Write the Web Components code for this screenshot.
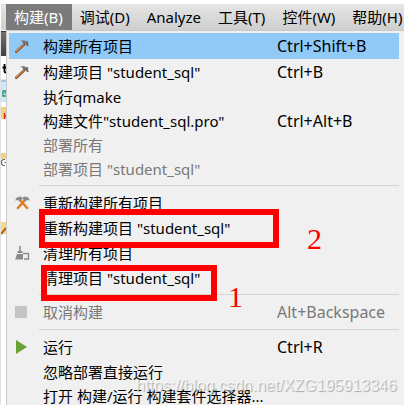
<!DOCTYPE html>
<html lang="zh-CN">
  <head>
    <meta charset="UTF-8" />
    <title>Qt Creator - 构建</title>
    <style>
      body {
        margin: 0;
        background: #fff;
        font-family: "Noto Sans", "Noto Sans CJK SC", sans-serif;
        font-size: 15px;
        color: #000;
      }
    </style>
  </head>
  <body>
    <ide-window>
      <menu-bar slot="bar">
        <menu-title active>构建(B)</menu-title>
        <menu-title>调试(D)</menu-title>
        <menu-title>Analyze</menu-title>
        <menu-title>工具(T)</menu-title>
        <menu-title>控件(W)</menu-title>
        <menu-title>帮助(H)</menu-title>
      </menu-bar>
      <side-strip slot="side"></side-strip>
      <drop-menu>
        <menu-item icon="hammer" keys="Ctrl+Shift+B" selected>构建所有项目</menu-item>
        <menu-item icon="hammer" keys="Ctrl+B">构建项目 "student_sql"</menu-item>
        <menu-item>执行qmake</menu-item>
        <menu-item keys="Ctrl+Alt+B">构建文件"student_sql.pro"</menu-item>
        <menu-item disabled>部署所有</menu-item>
        <menu-item disabled>部署项目 "student_sql"</menu-item>
        <menu-line></menu-line>
        <menu-item icon="rebuild">重新构建所有项目</menu-item>
        <menu-item>重新构建项目 "student_sql"</menu-item>
        <menu-item icon="clean">清理所有项目</menu-item>
        <menu-item>清理项目 "student_sql"</menu-item>
        <menu-line></menu-line>
        <menu-item icon="stop" keys="Alt+Backspace" disabled>取消构建</menu-item>
        <menu-line></menu-line>
        <menu-item icon="run" keys="Ctrl+R">运行</menu-item>
        <menu-item>忽略部署直接运行</menu-item>
        <menu-item>打开 构建/运行 构建套件选择器...</menu-item>
      </drop-menu>
      <mark-layer slot="marks"></mark-layer>
    </ide-window>

    <script>
      const icons = {
        hammer: `
          <path d="M1.200 12.800 9 5.500" stroke="#8a5230" stroke-width="2.600" stroke-linecap="round"/>
          <path d="M1.200 12.300 8.600 5.300" stroke="#cf8a58" stroke-width="1.200" stroke-linecap="round"/>
          <path d="M5.500 1.500C7.500.5 9.500.8 11 2.200l1.200-.4 1.300 1.600-.6 1 .8 2-1.500.8L10 4.600 8.600 5.200 7.800 2.900z" fill="#64696b"/>
          <path d="M5.500 1.800c2-.8 3.800-.4 5.200.9l1 1" stroke="#a3a9ac" stroke-width=".8" fill="none"/>`,
        rebuild: `
          <path d="M2.200 12.800 10.500 3.500M12.800 12.800 4.500 3.500" stroke="#e07b1a" stroke-width="2.400"/>
          <path d="M0 4.500 2 1.200 6 .5 7.800 2.500 4.500 5.500 3 4zM15 4.500 13 1.200 9 .5 7.200 2.500 10.500 5.500 12 4z" fill="#8b8b8b"/>`,
        clean: `
          <path d="M4.200 0h1.600v5H4.200zM2.500 5h5v2h-5zM2 8h6v5.500H0z" fill="#8b8b8b"/>
          <path d="M8 7.500h5.500v5.500H9" stroke="#8b8b8b" stroke-width="1.400" fill="none"/>`,
        stop: `<path d="M0 1h12v12H0z" fill="#c3c3c3"/>`,
        run: `<path d="M1 0 12 7 1 14z" fill="#6aa136"/>`,
      };

      class IdeWindow extends HTMLElement {
        constructor() {
          super();
          this.attachShadow({ mode: "open" }).innerHTML = `
            <style>
              :host {
                display: grid;
                grid-template: auto 1fr / 6px 1fr;
                position: relative;
                box-sizing: border-box;
                height: 100vh;
                padding-top: 4px;
                overflow: hidden;
              }
              slot[name="bar"] { display: block; grid-column: 1 / 3; min-width: 0; }
            </style>
            <slot name="bar"></slot>
            <slot name="side"></slot>
            <slot></slot>
            <slot name="marks"></slot>
          `;
        }
      }

      class MenuBar extends HTMLElement {
        constructor() {
          super();
          this.attachShadow({ mode: "open" }).innerHTML = `
            <style>
              :host {
                display: flex;
                height: 26px;
                margin-left: 1px;
                padding-left: 5px;
                overflow: hidden;
                background: linear-gradient(#e6e6e6, #cecece);
              }
            </style>
            <slot></slot>
          `;
        }
      }

      class MenuTitle extends HTMLElement {
        constructor() {
          super();
          this.attachShadow({ mode: "open" }).innerHTML = `
            <style>
              :host { display: block; flex: none; }
              button {
                height: 100%;
                padding: 1px 9px 1px 8px;
                border: 0;
                background: none;
                font: inherit;
                line-height: 24px;
                color: #000;
                white-space: nowrap;
              }
              :host([active]) button { background: #7b7b7b; color: #fff; }
            </style>
            <button type="button"><slot></slot></button>
          `;
        }
      }

      // the part of the project tree that the open menu leaves visible
      class SideStrip extends HTMLElement {
        constructor() {
          super();
          this.attachShadow({ mode: "open" }).innerHTML = `
            <style>
              :host { display: block; overflow: hidden; border-left: 1px solid #e2e2e2; }
              svg { display: block; }
            </style>
            <svg width="5" height="375" viewBox="1 30 5 375">
              <defs>
                <linearGradient id="dark" x2="0" y2="1">
                  <stop stop-color="#737373"/><stop offset="1" stop-color="#404040"/>
                </linearGradient>
              </defs>
              <path d="M1 31h5v25H1z" fill="url(#dark)"/>
              <path d="M1 31h5v1H1z" fill="#333"/>
              <path d="M2.500 67.500H6M4.500 64v7.500q0 1 1.500 1" stroke="#000" stroke-width="1.800" fill="none"/>
              <path d="M1 79h5v23H1z" fill="#cce8ff"/>
              <path d="M1 80h5v2H1z" fill="#9cc8ea"/>
              <path d="M6 91H3v5h3M6 93H4.500" stroke="#159a62" stroke-width="1.300" fill="none"/>
              <path d="M1 107h5v12H1z" fill="#f4d27a"/>
              <path d="M4.500 113v6M4.500 116H6" stroke="#e3231b" stroke-width="1.400"/>
              <path d="M1 153h5v6H1z" fill="#f4d27a"/>
              <path d="M5 159.500H3L1.500 161v3L3 165.500h2M4.500 162.500H6" stroke="#58717b" stroke-width="1.200" fill="none"/>
              <path d="M1 222h5v12H1z" fill="#f7da83"/>
              <path d="m1 234 5-6" stroke="#b65f14" stroke-width="2"/>
            </svg>
          `;
        }
      }

      class DropMenu extends HTMLElement {
        constructor() {
          super();
          this.attachShadow({ mode: "open" }).innerHTML = `
            <style>
              :host {
                display: flex;
                flex-direction: column;
                min-width: 0;
                padding: 2px 5px 2px 2px;
                border-left: 1px solid #c9c9c9;
                border-top: 1px solid #c9c9c9;
                background: #f0f0f0;
              }
            </style>
            <slot></slot>
          `;
        }
      }

      class MenuItem extends HTMLElement {
        constructor() {
          super();
          this.attachShadow({ mode: "open" }).innerHTML = `
            <style>
              :host { display: block; flex: none; }
              button {
                display: grid;
                grid-template-columns: 34px 1fr 122px;
                align-items: center;
                width: 100%;
                height: 24px;
                padding: 0;
                border: 0;
                background: none;
                font: inherit;
                line-height: 24px;
                text-align: left;
                white-space: nowrap;
                color: #000;
              }
              :host([icon]) button { height: 26px; }
              :host([selected]) button { background: #91c9f7; }
              :host([disabled]) button { color: #787878; }
              .icon { padding-left: 6px; }
              .label { min-width: 0; }
              .keys { font-size: 16px; }
              svg { display: block; }
            </style>
            <button type="button">
              <span class="icon"></span>
              <span class="label"><slot></slot></span>
              <span class="keys"></span>
            </button>
          `;
        }

        connectedCallback() {
          const icon = icons[this.getAttribute("icon")];
          if (icon) {
            this.shadowRoot.querySelector(".icon").innerHTML =
              `<svg width="15" height="15" viewBox="0 0 15 15">${icon}</svg>`;
          }
          this.shadowRoot.querySelector(".keys").textContent = this.getAttribute("keys") || "";
          this.shadowRoot.querySelector("button").disabled = this.hasAttribute("disabled");
        }
      }

      class MenuLine extends HTMLElement {
        constructor() {
          super();
          this.attachShadow({ mode: "open" }).innerHTML = `
            <style>
              :host { display: block; flex: none; padding: 4px 0 4px 30px; }
              div { height: 1px; background: #d4d4d4; }
            </style>
            <div></div>
          `;
        }
      }

      // red boxes, step numbers and the watermark, all over the menu
      class MarkLayer extends HTMLElement {
        constructor() {
          super();
          this.attachShadow({ mode: "open" }).innerHTML = `
            <style>
              :host { position: absolute; inset: 0; pointer-events: none; }
              .box { position: absolute; box-sizing: border-box; border: 6px solid #f00; }
              .second { left: 39px; top: 209px; width: 240px; height: 39px; }
              .first { left: 41px; top: 265px; width: 176px; height: 36px; }
              .step {
                position: absolute;
                font: 30px/30px "Liberation Serif", serif;
                color: #f00;
              }
              .two { left: 307px; top: 224px; }
              .one { left: 228px; top: 282px; }
              .water {
                position: absolute;
                left: 136px;
                top: 376px;
                font: 16px/20px "Liberation Sans", sans-serif;
                color: rgba(255, 255, 255, 0.7);
                text-shadow: 1px 1px 1px rgba(0, 0, 0, 0.3);
              }
            </style>
            <div class="box second"></div>
            <div class="box first"></div>
            <span class="step two">2</span>
            <span class="step one">1</span>
            <span class="water">https://blog.csdn.net/XZG195913346</span>
          `;
        }
      }

      customElements.define("ide-window", IdeWindow);
      customElements.define("menu-bar", MenuBar);
      customElements.define("menu-title", MenuTitle);
      customElements.define("side-strip", SideStrip);
      customElements.define("drop-menu", DropMenu);
      customElements.define("menu-item", MenuItem);
      customElements.define("menu-line", MenuLine);
      customElements.define("mark-layer", MarkLayer);
    </script>
  </body>
</html>
